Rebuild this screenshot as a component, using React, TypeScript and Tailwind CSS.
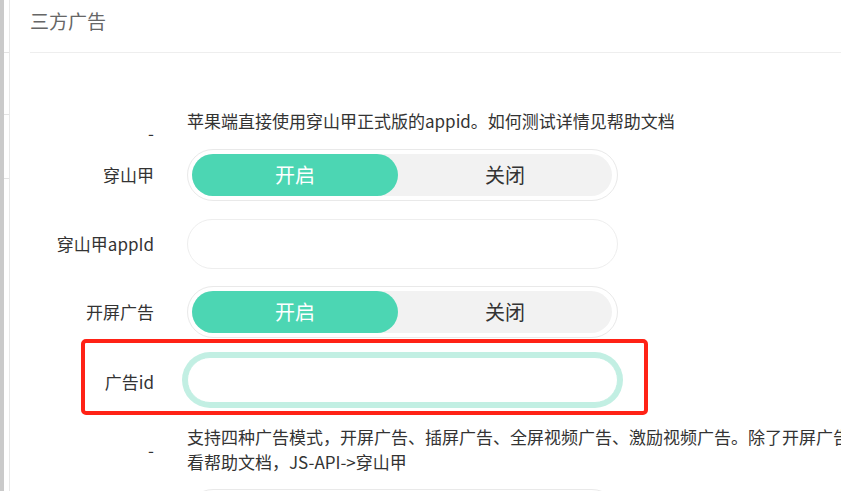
function Toggle({ on = true }: { on?: boolean }) {
  return (
    <div className="box-border h-[52px] w-[431px] rounded-full border border-[#e9e9e9] bg-white pt-[4px] pb-[4px] pl-[4px] pr-[5px]">
      <div className="flex h-[42px] w-full rounded-full bg-[#f2f2f2]">
        <div
          className={`flex w-[206px] items-center justify-center rounded-full text-[20px] ${
            on ? "bg-[#4cd6b3] text-white" : "text-[#333]"
          }`}
        >
          开启
        </div>
        <div className="flex flex-1 items-center justify-center text-[20px] text-[#333]">关闭</div>
      </div>
    </div>
  )
}

function Label({ children, className = "" }: { children: React.ReactNode; className?: string }) {
  return <div className={`w-[124px] shrink-0 text-right text-[17px] text-[#333] ${className}`}>{children}</div>
}

export default function App() {
  return (
    <div className="flex h-[491px] w-[841px] overflow-hidden bg-white font-['Noto_Sans_CJK_SC','Noto_Sans',sans-serif]">
      {/* left gutter */}
      <div className="w-[4px] shrink-0 bg-[#cacaca]" />
      <div className="flex w-[5px] shrink-0 flex-col">
        <div className="h-[53px] border-b border-[#e3e3e3]" />
        <div className="h-[62px] border-b border-[#e3e3e3]" />
        <div className="h-[64px] border-b border-[#e3e3e3]" />
      </div>
      <div className="w-px shrink-0 bg-[#e8e8e8]" />

      <div className="min-w-0 flex-1 pl-5">
        <div className="box-border h-[53px] border-b border-[#eeeeee] pt-[8px] text-[19px] leading-[26px] text-[#666]">
          三方广告
        </div>

        <div className="flex flex-col">
          <div className="mt-[56px] flex">
            <Label className="pt-[12px] leading-[24px]">-</Label>
            <div className="ml-[33px] whitespace-nowrap text-[17px] leading-[24px] text-[#333]">
              苹果端直接使用穿山甲正式版的appid。如何测试详情见帮助文档
            </div>
          </div>

          <div className="mt-[4px] flex items-center">
            <Label>穿山甲</Label>
            <div className="ml-[33px]">
              <Toggle />
            </div>
          </div>

          <div className="mt-[18px] flex items-center">
            <Label>穿山甲appId</Label>
            <input className="ml-[33px] box-border h-[50px] w-[431px] rounded-full border border-[#eeeeee] bg-white px-5 outline-none" />
          </div>

          <div className="mt-[17px] flex items-center">
            <Label>开屏广告</Label>
            <div className="ml-[33px]">
              <Toggle />
            </div>
          </div>

          <div className="relative mt-[19px] flex items-center">
            <Label className="pt-[3px]">广告id</Label>
            <input className="ml-[33px] box-border h-[46px] w-[431px] rounded-full border border-[#c2efe3] bg-white px-5 outline-none ring-[5px] ring-[#c2efe3]" />
            {/* annotation */}
            <div className="pointer-events-none absolute -top-[18px] left-[51px] h-[76px] w-[567px] rounded-[5px] border-4 border-[#ff2216]" />
          </div>

          <div className="mt-[21px] flex items-center">
            <Label className="leading-[25px]">-</Label>
            <div className="ml-[33px] whitespace-nowrap text-[17px] leading-[25px] text-[#333]">
              支持四种广告模式，开屏广告、插屏广告、全屏视频广告、激励视频广告。除了开屏广告外，其余广告的用法请查
              <br />
              看帮助文档，JS-API-&gt;穿山甲
            </div>
          </div>

          <div className="mt-[15px] flex items-center">
            <div className="w-[124px] shrink-0" />
            <div className="ml-[33px] h-[52px] w-[431px] rounded-full border border-[#e9e9e9] bg-white" />
          </div>
        </div>
      </div>
    </div>
  )
}
